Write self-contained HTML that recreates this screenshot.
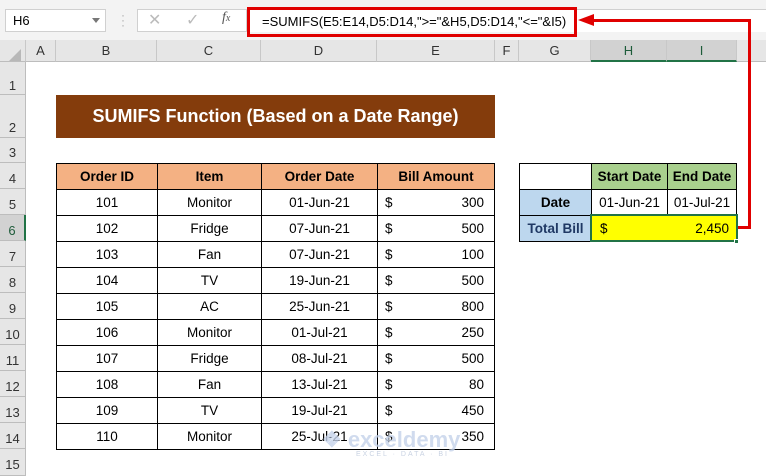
<!DOCTYPE html>
<html><head><meta charset="utf-8"><style>
*{margin:0;padding:0;box-sizing:border-box}
body{width:766px;height:476px;overflow:hidden;background:#fff;font-family:"Liberation Sans",Calibri,sans-serif;position:relative}
.a{position:absolute}
.ch{position:absolute;top:40px;height:22px;background:#e6e6e6;border-right:1px solid #c8c8c8;border-bottom:1px solid #bdbdbd;font-size:13px;color:#333;text-align:center;line-height:22px}
.rh{position:absolute;left:0;width:26px;background:#e6e6e6;border-bottom:1px solid #bdbdbd;border-right:1px solid #bdbdbd;font-size:13px;color:#333;text-align:center}
.c{position:absolute;border:1px solid #000;font-size:13.5px;text-align:center;display:flex;align-items:center;justify-content:center;color:#000}
.b{font-weight:bold}
</style></head><body>
<div class="a" style="left:0;top:0;width:766px;height:40px;background:#f3f3f3"></div>
<div class="a" style="left:5px;top:9px;width:101px;height:23px;background:#fff;border:1px solid #d0d0d0;font-size:13px;line-height:21px;padding-left:7px">H6</div>
<div class="a" style="left:92px;top:18px;width:0;height:0;border-left:4px solid transparent;border-right:4px solid transparent;border-top:5px solid #777"></div>
<div class="a" style="left:121px;top:13px;color:#aaa;font-size:12px;line-height:5px">·<br>·<br>·</div>
<div class="a" style="left:137px;top:9px;width:110px;height:23px;background:#fff;border:1px solid #d0d0d0"></div>
<div class="a" style="left:148px;top:10px;color:#bbb;font-size:16px">✕</div>
<div class="a" style="left:186px;top:10px;color:#bbb;font-size:16px">✓</div>
<div class="a" style="left:222px;top:10px;color:#555;font-size:14px;font-style:italic;font-family:'Liberation Serif',serif">f<span style="font-size:10px">x</span></div>
<div class="a" style="left:247px;top:9px;width:519px;height:23px;background:#fff;border-top:1px solid #d0d0d0"></div>
<div class="a" style="left:247px;top:7px;width:330px;height:30px;border:3px solid #e00000;font-size:13px;line-height:24px;padding-left:12px;white-space:nowrap">=SUMIFS(E5:E14,D5:D14,"&gt;="&amp;H5,D5:D14,"&lt;="&amp;I5)</div>
<div class="ch" style="left:0;width:26px"></div>
<div class="a" style="left:9px;top:49px;width:0;height:0;border-left:12px solid transparent;border-bottom:12px solid #b8b8b8"></div>
<div class="ch" style="left:26px;width:30px">A</div>
<div class="ch" style="left:56px;width:101px">B</div>
<div class="ch" style="left:157px;width:104px">C</div>
<div class="ch" style="left:261px;width:116px">D</div>
<div class="ch" style="left:377px;width:118px">E</div>
<div class="ch" style="left:495px;width:24px">F</div>
<div class="ch" style="left:519px;width:72px">G</div>
<div class="ch" style="left:591px;width:76px;background:#d2d2d2;border-bottom:2px solid #217346;color:#1e5c3a">H</div>
<div class="ch" style="left:667px;width:70px;background:#d2d2d2;border-bottom:2px solid #217346;color:#1e5c3a">I</div>
<div class="ch" style="left:737px;width:29px;border-right:none"></div>
<div class="rh" style="top:62px;height:33px;padding-top:16px">1</div>
<div class="rh" style="top:95px;height:43px;padding-top:25px">2</div>
<div class="rh" style="top:138px;height:25px;padding-top:7px">3</div>
<div class="rh" style="top:163px;height:26px;padding-top:8px">4</div>
<div class="rh" style="top:189px;height:26px;padding-top:8px">5</div>
<div class="rh" style="top:215px;height:26px;padding-top:8px;background:#d2d2d2;border-right:2px solid #217346;color:#1e5c3a">6</div>
<div class="rh" style="top:241px;height:26px;padding-top:8px">7</div>
<div class="rh" style="top:267px;height:26px;padding-top:8px">8</div>
<div class="rh" style="top:293px;height:26px;padding-top:8px">9</div>
<div class="rh" style="top:319px;height:26px;padding-top:8px">10</div>
<div class="rh" style="top:345px;height:26px;padding-top:8px">11</div>
<div class="rh" style="top:371px;height:26px;padding-top:8px">12</div>
<div class="rh" style="top:397px;height:26px;padding-top:8px">13</div>
<div class="rh" style="top:423px;height:26px;padding-top:8px">14</div>
<div class="rh" style="top:449px;height:27px;padding-top:8px">15</div>
<div class="a" style="left:56px;top:95px;width:439px;height:43px;background:#843c0c;color:#fff;font-weight:bold;font-size:18px;line-height:43px;text-align:center">SUMIFS Function (Based on a Date Range)</div>
<div id="t"></div>
<script>
var cols=[[56,101],[157,104],[261,116],[377,117]];
var h='';
var hd=['Order ID','Item','Order Date','Bill Amount'];
for(var i=0;i<4;i++)h+='<div class="c b" style="left:'+cols[i][0]+'px;top:163px;width:'+(cols[i][1]+1)+'px;height:27px;background:#f4b183">'+hd[i]+'</div>';
var d=[[101,'Monitor','01-Jun-21',300],[102,'Fridge','07-Jun-21',500],[103,'Fan','07-Jun-21',100],[104,'TV','19-Jun-21',500],[105,'AC','25-Jun-21',800],[106,'Monitor','01-Jul-21',250],[107,'Fridge','08-Jul-21',500],[108,'Fan','13-Jul-21',80],[109,'TV','19-Jul-21',450],[110,'Monitor','25-Jul-21',350]];
for(var r=0;r<10;r++){var y=189+r*26;
for(var i=0;i<3;i++)h+='<div class="c" style="left:'+cols[i][0]+'px;top:'+y+'px;width:'+(cols[i][1]+1)+'px;height:27px">'+d[r][i]+'</div>';
h+='<div class="c" style="left:377px;top:'+y+'px;width:118px;height:27px;justify-content:space-between;padding:0 10px 0 7px"><span>$</span><span>'+d[r][3]+'</span></div>';}
document.getElementById('t').innerHTML=h;
</script>
<div class="c" style="left:519px;top:163px;width:73px;height:27px"></div>
<div class="c b" style="left:591px;top:163px;width:77px;height:27px;background:#a9d08e">Start Date</div>
<div class="c b" style="left:667px;top:163px;width:70px;height:27px;background:#a9d08e">End Date</div>
<div class="c b" style="left:519px;top:189px;width:73px;height:27px;background:#bdd7ee">Date</div>
<div class="c" style="left:591px;top:189px;width:77px;height:27px">01-Jun-21</div>
<div class="c" style="left:667px;top:189px;width:70px;height:27px">01-Jul-21</div>
<div class="c b" style="left:519px;top:215px;width:73px;height:27px;background:#bdd7ee;color:#1f3864">Total Bill</div>
<div class="c" style="left:590px;top:214px;width:148px;height:28px;background:#ffff00;border:2px solid #217346;justify-content:space-between;padding:0 7px 0 8px"><span>$</span><span>2,450</span></div>
<div class="a" style="left:734px;top:239px;width:5px;height:5px;background:#217346;border:1px solid #fff"></div>
<div class="a" style="left:738px;top:226px;width:12px;height:3px;background:#e00000"></div>
<div class="a" style="left:748px;top:19px;width:3px;height:210px;background:#e00000"></div>
<div class="a" style="left:590px;top:19px;width:161px;height:3px;background:#e00000"></div>
<div class="a" style="left:578px;top:14px;width:0;height:0;border-top:6px solid transparent;border-bottom:6px solid transparent;border-right:16px solid #e00000"></div>
<div class="a" style="left:322px;top:427px;color:#c5d3ea;font-size:22px;font-weight:bold;opacity:.8">❖ exceldemy</div>
<div class="a" style="left:356px;top:451px;color:#c9d3e3;font-size:7px;letter-spacing:2px">EXCEL · DATA · BI</div>
</body></html>
